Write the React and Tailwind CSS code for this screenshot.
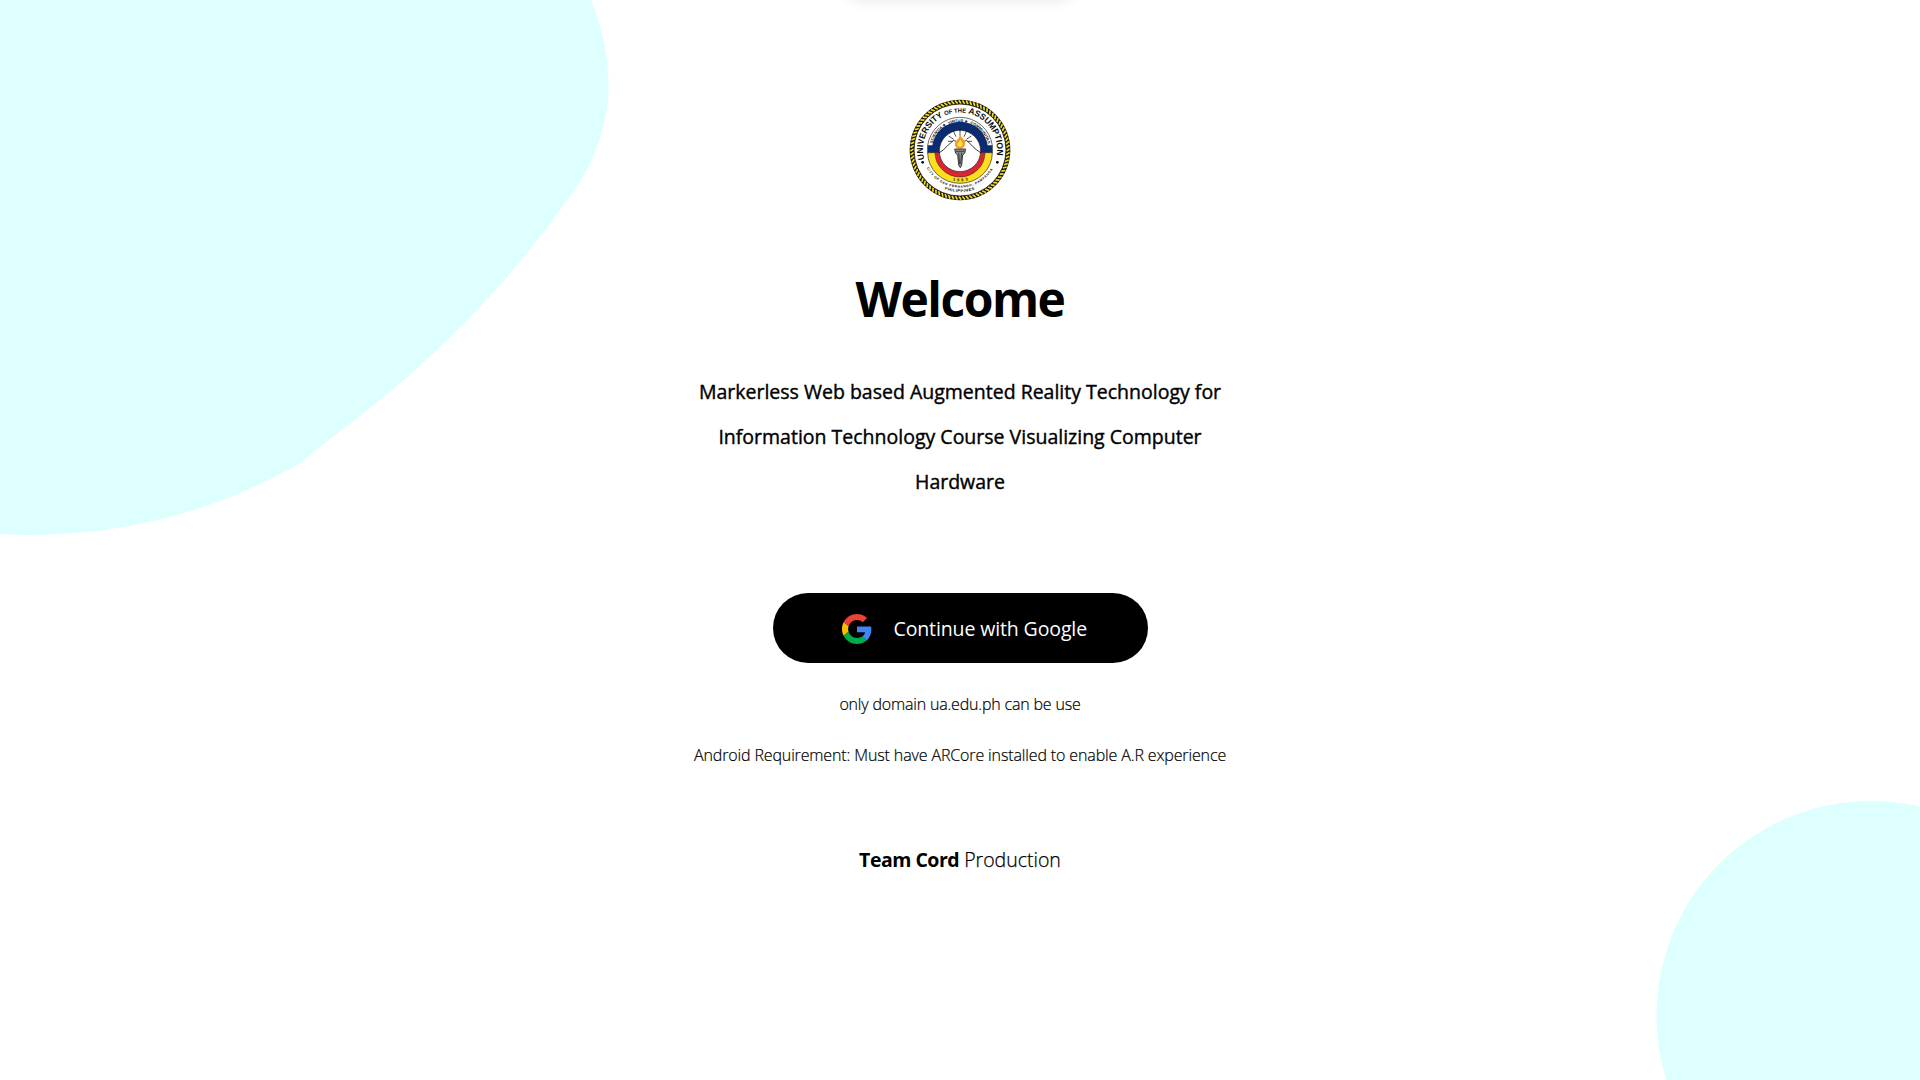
import React from "react";

const ROPE_STRANDS = Array.from({ length: 84 }, (_, i) => (i * 360) / 84);

function Blobs() {
  return (
    <svg
      className="absolute inset-0 h-full w-full"
      viewBox="0 0 1920 1080"
      fill="#ddfffd"
      aria-hidden="true"
    >
      <path d="M0 0H591C602 28 608.5 56 608.5 84C608.5 122 597 158 573 192C500 296 424 370 318 448C312 452 308 457 303 461C298 465 292 468 284 472C204 515 106 540 0 534Z" />
      <circle cx="1871" cy="1015.5" r="214.5" />
    </svg>
  );
}

function Seal() {
  return (
    <svg
      className="h-[120px] w-[120px]"
      viewBox="0 0 360 360"
      role="img"
      aria-label="University of the Assumption"
    >
      <defs>
        <path id="name-arc" d="M73 208A111 111 0 1 1 287 208" />
        <path id="motto-arc" d="M96 163A86 86 0 0 1 264 163" />
        <path id="city-arc" d="M80 234A114 114 0 0 0 280 234" />
        <path id="country-arc" d="M132 297A126 126 0 0 0 228 297" />
        <path id="year-arc" d="M140 265A94 94 0 0 0 220 265" />
      </defs>
      <circle cx="180" cy="180" r="151" fill="#171500" />
      <g stroke="#f4dc2e" strokeWidth="5">
        {ROPE_STRANDS.map((angle) => (
          <line key={angle} x1="176.5" y1="31" x2="183.5" y2="41" transform={`rotate(${angle} 180 180)`} />
        ))}
      </g>
      <circle cx="180" cy="180" r="138" fill="#fff" stroke="#171500" strokeWidth="2.5" />
      <path d="M83 188V166A98 98 0 0 1 277 166V188Z" fill="#fff" stroke="#222" strokeWidth="2" />
      <path d="M83 188V166H97A84 84 0 0 1 263 166H277V188Z" fill="#0b2b70" />
      <path d="M83 188A97 92 0 0 0 277 188Z" fill="#fde01b" stroke="#222" strokeWidth="2" />
      <path d="M105 188A75 73 0 0 0 255 188Z" fill="#dc2532" stroke="#222" strokeWidth="1.5" />
      <circle cx="180" cy="183" r="62" fill="#fff" stroke="#222" strokeWidth="2" />
      <path d="M117 189C137 177 148 159 161 151C166 155 170 153 174 157M243 189C224 178 210 159 199 151C194 155 190 153 187 157" fill="none" stroke="#111" strokeWidth="2.5" />
      <path d="M180 116V137M160 123L168 140M200 123L192 140M146 138L161 148M214 138L199 148M144 154H158M202 154H216" stroke="#111" strokeWidth="2.2" />
      <path d="M180 134C185 145 198 150 195 164C193 179 168 181 165 165C163 155 177 147 180 134Z" fill="#fa9b1b" />
      <path d="M181 148C184 156 190 159 187 166C184 172 173 171 172 164C172 158 180 155 181 148Z" fill="#ffe557" />
      <path d="M164 177H197L194 190L188 195L185 226L181 233L176 225L173 195L167 190Z" fill="#8c8c8c" stroke="#222" strokeWidth="2.5" />
      <path d="M167 184H194M176 188L179 222M185 188L182 222" stroke="#333" strokeWidth="2.5" />
      <g fill="#0a0a0a" fontFamily="Liberation Sans, sans-serif" fontWeight="700">
        <text fontSize="26">
          <textPath href="#name-arc" textLength="396" lengthAdjust="spacingAndGlyphs">
            UNIVERSITY <tspan fontSize="18">OF THE</tspan> ASSUMPTION
          </textPath>
        </text>
        <text fontSize="11">
          <textPath href="#motto-arc" startOffset="3" textLength="228" lengthAdjust="spacingAndGlyphs">
            SCIENTIA ★ VIRTUS ★ COMMUNITAS
          </textPath>
        </text>
        <text fontSize="10">
          <textPath href="#city-arc" textLength="240" lengthAdjust="spacing">
            CITY OF SAN FERNANDO, PAMPANGA
          </textPath>
        </text>
        <text fontSize="12">
          <textPath href="#country-arc" startOffset="2" textLength="92" lengthAdjust="spacing">
            PHILIPPINES
          </textPath>
        </text>
        <text fontSize="12">
          <textPath href="#year-arc" startOffset="19" textLength="46" lengthAdjust="spacing">
            1963
          </textPath>
        </text>
      </g>
      <circle cx="68" cy="217" r="4" />
      <circle cx="292" cy="217" r="4" />
    </svg>
  );
}

function GoogleIcon() {
  return (
    <svg className="mt-px h-[30px] w-[30px]" viewBox="0 0 48 48" aria-hidden="true">
      <path fill="#ea4335" d="M24 9.5c3.54 0 6.71 1.22 9.21 3.6l6.85-6.85C35.9 2.38 30.47 0 24 0 14.62 0 6.51 5.38 2.56 13.22l7.98 6.19C12.43 13.72 17.74 9.5 24 9.5z" />
      <path fill="#4285f4" d="M46.98 24.55c0-1.57-.15-3.09-.38-4.55H24v9.02h12.94c-.58 2.96-2.26 5.48-4.78 7.18l7.73 6c4.51-4.18 7.09-10.36 7.09-17.65z" />
      <path fill="#fbbc05" d="M10.53 28.59c-.48-1.45-.76-2.99-.76-4.59s.27-3.14.76-4.59l-7.98-6.19C.92 16.46 0 20.12 0 24c0 3.88.92 7.54 2.56 10.78l7.97-6.19z" />
      <path fill="#00ac47" d="M24 48c6.48 0 11.93-2.13 15.89-5.81l-7.73-6c-2.15 1.45-4.92 2.3-8.16 2.3-6.26 0-11.57-4.22-13.47-9.91l-7.98 6.19C6.51 42.62 14.62 48 24 48z" />
    </svg>
  );
}

export default function App() {
  return (
    <div className="relative h-[1080px] w-full overflow-hidden bg-white font-['Open_Sans','Noto_Sans',sans-serif] text-black">
      <Blobs />
      <div className="absolute -top-10 left-1/2 h-10 w-[220px] -translate-x-1/2 rounded-lg bg-white shadow-[0_0_14px_rgba(0,0,0,0.10)]" />
      <main className="relative flex flex-col items-center pt-[90px] text-center">
        <Seal />
        <h1 className="mt-[54px] whitespace-nowrap text-[48px] font-bold leading-[70px] tracking-[-1.5px]">Welcome</h1>
        <p className="mt-[35px] flex flex-col items-center whitespace-nowrap text-[19.5px] leading-[45px] [-webkit-text-stroke:0.4px_#000]">
          <span>Markerless Web based Augmented Reality Technology for</span>
          <span>Information Technology Course Visualizing Computer</span>
          <span>Hardware</span>
        </p>
        <button className="mt-[89px] flex h-[70px] w-[375px] items-center rounded-full bg-black pl-[69px] text-white">
          <GoogleIcon />
          <span className="ml-[22px] mt-px whitespace-nowrap text-[19.5px] tracking-[-0.12px]">Continue with Google</span>
        </button>
        <p className="mt-[29px] whitespace-nowrap text-[16px] font-light leading-6 tracking-[-0.18px] [-webkit-text-stroke:0.2px_#000]">
          only domain ua.edu.ph can be use
        </p>
        <p className="mt-[27px] whitespace-nowrap text-[16px] font-light leading-6 tracking-[-0.13px] [-webkit-text-stroke:0.2px_#000]">
          Android Requirement: Must have ARCore installed to enable A.R experience
        </p>
        <p className="mt-[78px] whitespace-nowrap text-[19.5px] font-light leading-[30px]">
          <b className="font-bold tracking-[-0.5px]">Team Cord</b>{" "}
          <span className="[-webkit-text-stroke:0.25px_#000]">Production</span>
        </p>
      </main>
    </div>
  );
}
